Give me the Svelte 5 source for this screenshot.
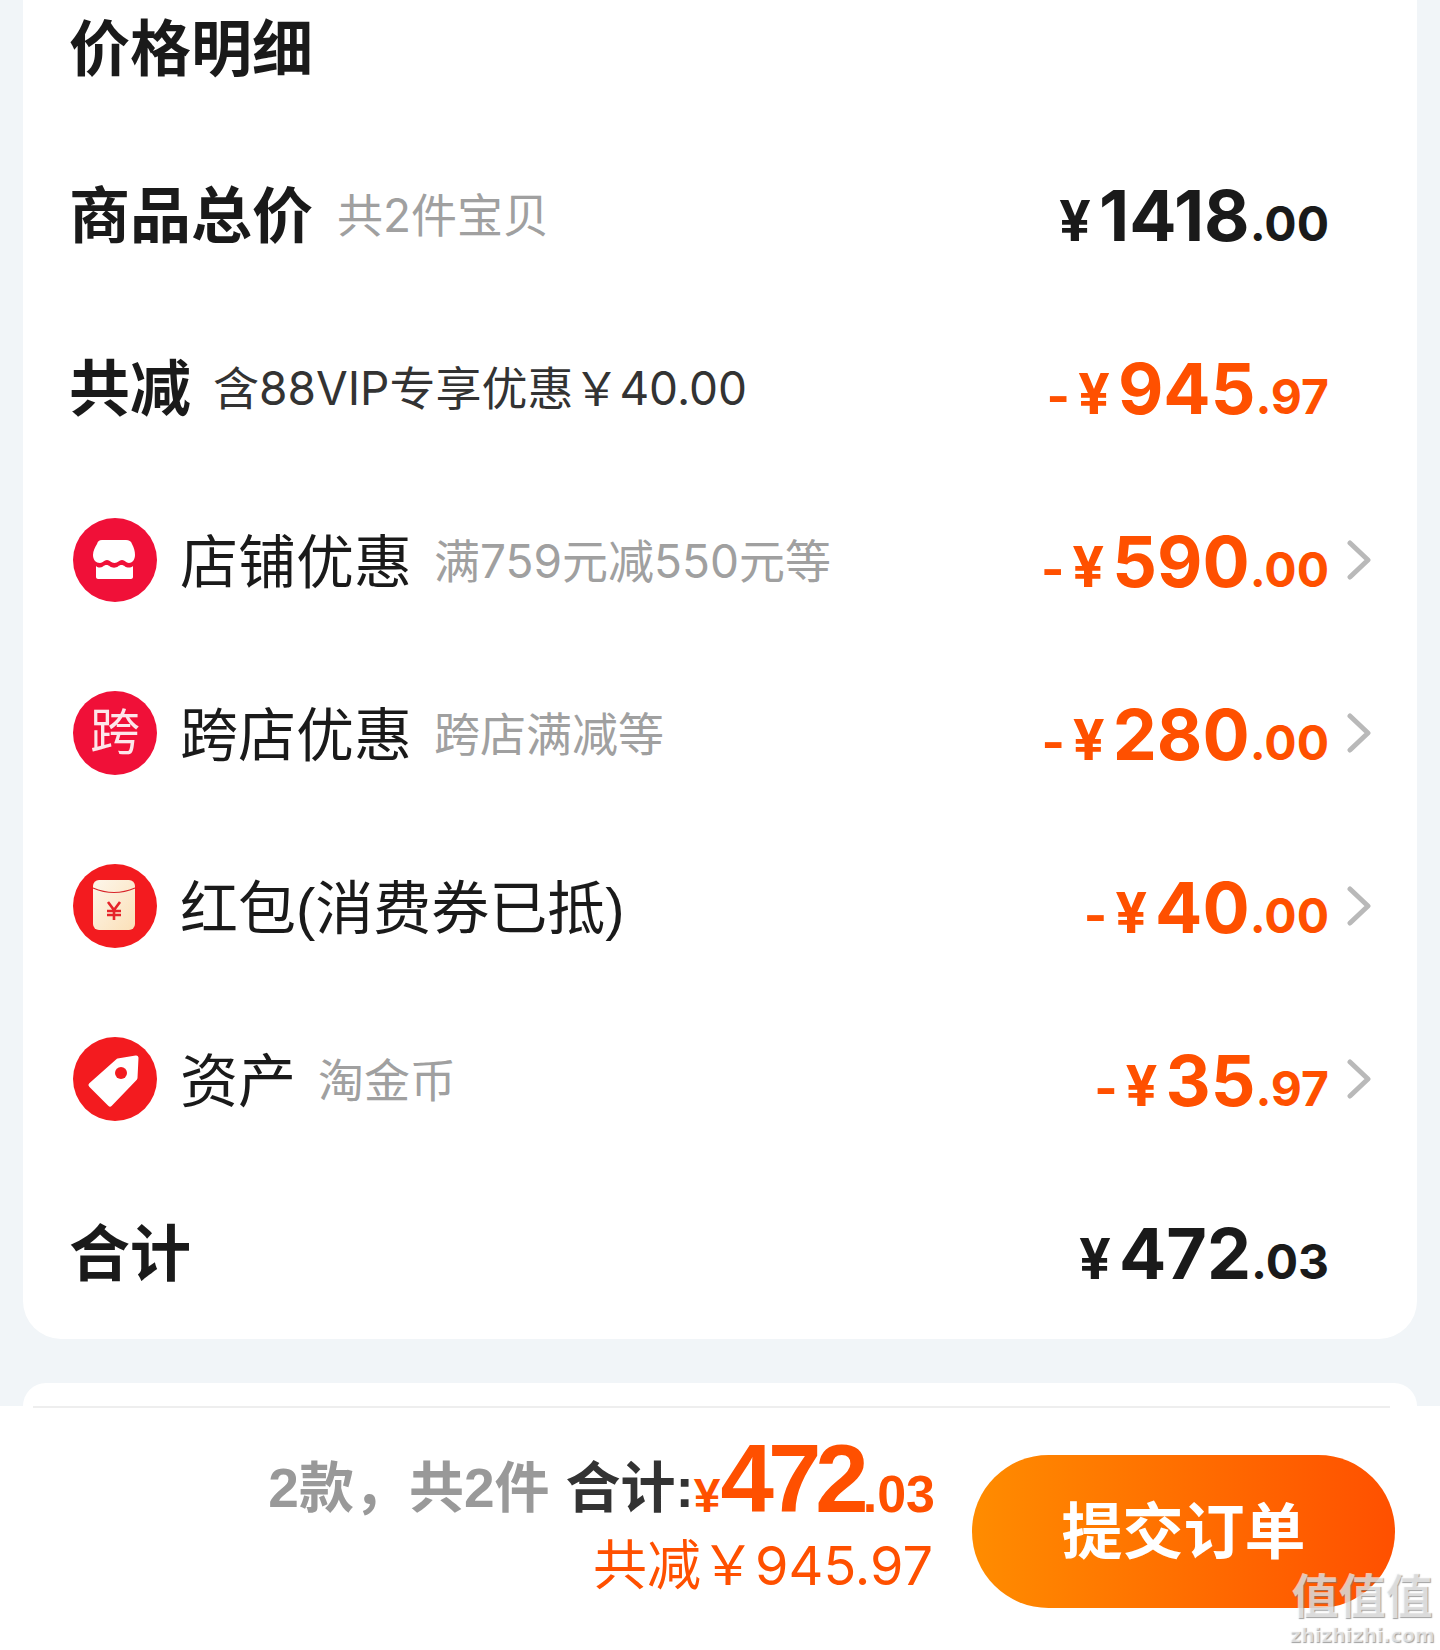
<script>
  const cjk = '"Liberation Sans", "Noto Sans CJK SC", sans-serif';

  const discounts = [
    { icon: 'store', label: '店铺优惠', note: '满759元减550元等', int: '590', dec: '00' },
    { icon: 'cross', label: '跨店优惠', note: '跨店满减等', int: '280', dec: '00' },
    { icon: 'packet', label: '红包(消费券已抵)', note: '', int: '40', dec: '00' },
    { icon: 'tag', label: '资产', note: '淘金币', int: '35', dec: '97' }
  ];
</script>

{#snippet price(int, dec, minus)}
  <span class="price" class:orange={minus}>
    {#if minus}<span class="minus">-</span>{/if}<span class="yen">¥</span><span class="int">{int}</span><span class="dec">.{dec}</span>
  </span>
{/snippet}

<div class="page" style:font-family={cjk}>
  <section class="card">
    <h2 class="title">价格明细</h2>

    <div class="row">
      <div class="left">
        <span class="strong">商品总价</span>
        <span class="note">共2件宝贝</span>
      </div>
      {@render price('1418', '00', false)}
    </div>

    <div class="row">
      <div class="left">
        <span class="strong">共减</span>
        <span class="note dark">含88VIP专享优惠￥40.00</span>
      </div>
      {@render price('945', '97', true)}
    </div>

    {#each discounts as d}
      <div class="row">
        <div class="left">
          <span class="icon" class:red={d.icon === 'packet' || d.icon === 'tag'}>
            {#if d.icon === 'store'}
              <svg viewBox="0 0 84 84" width="84" height="84">
                <path fill="#fff" d="M29 22H53C56 22 58 23 59 26C61 30 62 33 62 37C62 42 59 45 56 45C53 45 52 42 49 42C46 42 45 45 41.500 45C38 45 37 42 34 42C31 42 30 45 27 45C23 45 20 42 20 37C20 33 22 29 24 26C25 23 26 22 29 22Z"/>
                <path fill="#fff" d="M23 48C25 50 28 50 30 48.500C32 46.500 35 46.500 37 48.500C39 50 43 50 45 48.500C47 46.500 50 46.500 52 48.500C54 50 58 50 60 48V59C60 60 59 61 58 61H25C24 61 23 60 23 59Z"/>
              </svg>
            {:else if d.icon === 'cross'}
              <span class="cross">跨</span>
            {:else if d.icon === 'packet'}
              <svg viewBox="0 0 84 84" width="84" height="84">
                <defs>
                  <linearGradient id="env" x1="0" y1="0" x2="1" y2="1">
                    <stop offset="0" stop-color="#fdf6ea"/>
                    <stop offset="1" stop-color="#fbe0b8"/>
                  </linearGradient>
                </defs>
                <rect x="20" y="16" width="42" height="50" rx="6" fill="url(#env)"/>
                <path d="M20 24q21 9 42 0" fill="none" stroke="#d8262b" stroke-width="1.2"/>
                <path d="M35 38l6 8 6-8M41 46v10M34 47h14M34 51h14" fill="none" stroke="#e5242a" stroke-width="2.6"/>
              </svg>
            {:else}
              <svg viewBox="0 0 84 84" width="84" height="84">
                <path fill="#fff" stroke="#fff" stroke-width="5" stroke-linejoin="round" d="M45 24l18-3-1 20-25 26-19-19z"/>
                <circle cx="48" cy="36" r="6" fill="#f31b1f"/>
              </svg>
            {/if}
          </span>
          <span class="label">{d.label}</span>
          {#if d.note}<span class="note wide">{d.note}</span>{/if}
        </div>
        <div class="amount">
          {@render price(d.int, d.dec, true)}
          <svg class="chev" viewBox="0 0 24 40" width="24" height="40">
            <path d="M3 3l18 17L3 37" fill="none" stroke="#b9b9b9" stroke-width="5" stroke-linecap="round" stroke-linejoin="round"/>
          </svg>
        </div>
      </div>
    {/each}

    <div class="row">
      <div class="left">
        <span class="strong">合计</span>
      </div>
      {@render price('472', '03', false)}
    </div>
  </section>

  <div class="peek"></div>

  <footer class="bar">
    <div class="rule"></div>
    <div class="bar-body">
      <div class="summary">
        <div class="line1">
          <span class="count">2款&#xFF0C;共2件</span>
          <span class="sum">合计:</span><span class="y">¥</span><span class="big">472</span><span class="small">.03</span>
        </div>
        <div class="line2">共减￥945.97</div>
      </div>
      <button class="submit"><span>提交订单</span></button>
    </div>
    <div class="mark">
      <span class="mark-zh">值值值</span>
      <span class="mark-en">zhizhizhi.com</span>
    </div>
  </footer>
</div>

<style>
  :global(body) { margin: 0; background: #f1f5f8; }
  .page { width: 1440px; height: 1650px; overflow: hidden; background: #f1f5f8; display: flex; flex-direction: column; }

  .card { margin: 0 23px; height: 1339px; box-sizing: border-box; padding: 0 0 0 49px; background: #fff; border-radius: 0 0 38px 38px; flex: none; }
  .title { margin: 0 0 0 -3px; height: 127px; padding-top: 14px; box-sizing: border-box; font-size: 61px; line-height: 72px; font-weight: 700; color: #1a1a1a; }

  .row { height: 173px; display: flex; align-items: center; justify-content: space-between; padding-right: 88px; position: relative; }
  .left { display: flex; align-items: center; }
  .strong { font-size: 61px; font-weight: 700; color: #1a1a1a; margin-left: -3px; padding-bottom: 4px; }
  .label { font-size: 58px; color: #1a1a1a; margin-left: 23px; padding-bottom: 4px; }
  .note { font-family: Inter, "Noto Sans CJK SC", sans-serif; font-size: 46px; color: #a0a0a0; margin-left: 24px; padding-bottom: 4px; }
  .note.wide { margin-left: 22px; }
  .note.dark { color: #333; margin-left: 22px; }

  .icon { width: 84px; height: 84px; border-radius: 50%; background: #f01038; flex: none; display: flex; align-items: center; justify-content: center; margin-left: 1px; }
  .icon.red { background: #f31b1f; }
  .cross { font-size: 50px; color: #fde6ea; line-height: 1; }

  .price { display: inline-flex; align-items: baseline; color: #1a1a1a; font-family: Inter, "Liberation Sans", sans-serif; font-weight: 700; line-height: 1; transform: translateY(2px); }
  .price.orange { color: #ff5000; }
  .minus { font-size: 50px; margin-right: 8px; }
  .yen { font-size: 56px; margin-right: 8px; }
  .int { font-size: 70px; }
  .dec { font-size: 48px; }
  .amount { position: absolute; right: 88px; display: flex; align-items: center; }
  .chev { position: absolute; left: calc(100% + 18px); top: 50%; transform: translateY(-50%); }

  .peek { height: 23px; margin: 44px 23px 0; background: #fff; border-radius: 38px 38px 0 0; flex: none; }

  .bar { flex: none; height: 244px; background: #fff; position: relative; }
  .rule { height: 2px; margin: 0 50px 0 33px; background: #eeeeee; }
  .bar-body { display: flex; justify-content: flex-end; padding: 47px 45px 0 0; align-items: flex-start; }
  .summary { display: flex; flex-direction: column; align-items: flex-end; margin-right: 37px; margin-top: -29px; }
  .line1 { display: flex; align-items: baseline; white-space: nowrap; font-weight: 700; }
  .count { font-size: 55px; color: #999; margin-right: 16px; transform: translateY(-5px); }
  .sum { font-size: 55px; color: #333; transform: translateY(-5px); }
  .y { font-size: 48px; color: #ff5000; font-family: "Liberation Sans", sans-serif; }
  .big { font-size: 96px; color: #ff5000; font-family: "Liberation Sans", sans-serif; letter-spacing: -6px; line-height: 1.1; }
  .small { font-size: 52px; color: #ff5000; font-family: "Liberation Sans", sans-serif; }
  .line2 { font-family: Inter, "Noto Sans CJK SC", sans-serif; font-size: 54px; color: #ff5000; line-height: 1.2; white-space: nowrap; margin: 2px 2px 0 0; }

  .submit { width: 423px; height: 153px; border: 0; padding: 0 0 8px; border-radius: 77px; background: linear-gradient(90deg, #ff8c00, #ff5000); color: #fff; font: 700 61px "Liberation Sans", "Noto Sans CJK SC", sans-serif; }

  .mark { position: absolute; left: 1288px; top: 165px; width: 148px; display: flex; flex-direction: column; align-items: center; color: rgba(255, 255, 255, 0.65); text-shadow: 1px 1px 1px rgba(120, 120, 120, 0.7); }
  .mark-zh { font-size: 47px; line-height: 52px; font-weight: 700; white-space: nowrap; }
  .mark-en { font-size: 19px; line-height: 24px; font-family: "DejaVu Sans", sans-serif; font-weight: 700; white-space: nowrap; }
</style>
